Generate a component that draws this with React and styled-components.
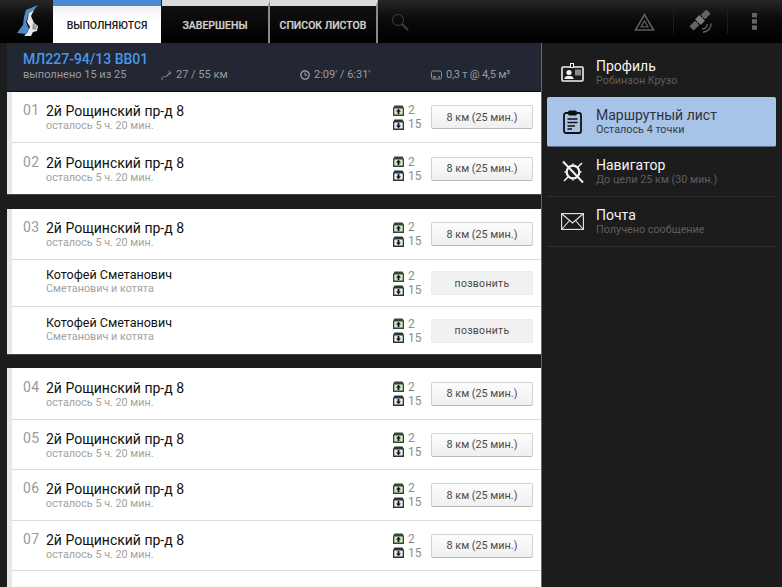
import React from 'react';
import styled, { createGlobalStyle } from 'styled-components';

const Global = createGlobalStyle`
  html, body { margin: 0; padding: 0; background: #1c1c1c; }
  body { font-family: Roboto, "Liberation Sans", sans-serif; }
  #root { width: 782px; height: 587px; overflow: hidden; }
  * { box-sizing: border-box; }
`;

const Screen = styled.div`width: 782px; height: 587px; display: flex; flex-direction: column; overflow: hidden; background: #1c1c1c;`;
const TopBar = styled.header`height: 43px; flex: none; display: flex; align-items: stretch; background: linear-gradient(#262626, #0a0a0a 45%, #000);`;
const Logo = styled.div`width: 53px; flex: none; display: flex; align-items: center; justify-content: center; padding: 0 0 1px 2px;`;
const Tab = styled.div`
  width: ${p => p.$w}px; flex: none; display: flex; align-items: center; justify-content: center;
  border-top: 6px solid ${p => (p.$active ? '#4a8ad4' : '#dcdcdc')};
  background: ${p => (p.$active ? 'linear-gradient(#eeeeee, #ffffff 35%)' : 'linear-gradient(#111, #000)')};
  border-right: ${p => (p.$active ? 'none' : '2px solid #8a8a8a')};
  color: ${p => (p.$active ? '#1a1a1a' : '#cfcfcf')};
  font-size: 10.5px; font-weight: 500; padding-top: 1px; margin-right: ${p => p.$mr || 0}px;
  text-shadow: ${p => (p.$active ? 'none' : '0 0 1px #777')};
`;
const SearchSlot = styled.div`width: 36px; margin-left: 13px; display: flex; align-items: center;`;
const TopActions = styled.div`margin-left: auto; display: flex; align-items: center; padding-right: 25px;`;
const ActionSlot = styled.div`width: ${p => p.$w}px; height: 24px; display: flex; align-items: center; justify-content: ${p => p.$j || 'center'}; border-right: ${p => (p.$line ? '1px solid #1d1d1d' : 'none')};`;

const Main = styled.div`flex: 1; display: flex; min-height: 0;`;
const LeftCol = styled.main`width: 542px; flex: none; padding-left: 7px; border-right: 1px solid #666; display: flex; flex-direction: column; overflow: hidden;`;
const RouteHead = styled.div`height: 49px; flex: none; background: #222733; border-bottom: 1px solid #0c0c0c; padding: 9px 0 0 16px; color: #a9a9a9;`;
const RouteId = styled.div`color: #4a96ec; font-size: 14px; font-weight: 500; line-height: 15px;`;
const StatRow = styled.div`display: flex; font-size: 11px; line-height: 14px; margin-top: 1px; color: #9b9b9b;`;
const Stat = styled.div`display: flex; align-items: center; gap: 4px; width: ${p => p.$w}px; flex: none; letter-spacing: ${p => p.$tight ? '-0.25px' : '0'};`;

const Card = styled.section`
  background: #fff; flex: none; margin-bottom: ${p => p.$mb || 0}px;
  border-left: 5px solid #e7e7e7; box-shadow: 0 1px 0 #444;
`;
const Row = styled.div`
  height: ${p => p.$h}px; display: flex; align-items: center; padding: 0 8px 0 11px;
  border-bottom: ${p => (p.$last ? 'none' : '1px solid #dcdcdc')};
`;
const Num = styled.div`width: 23px; flex: none; color: #9a9a9a; font-size: 14px; letter-spacing: 0.3px; margin-top: -14px;`;
const Info = styled.div`flex: 1; min-width: 0; margin-left: ${p => (p.$contact ? 23 : 0)}px; margin-top: ${p => (p.$contact ? -4 : 2)}px;`;
const Title = styled.div`color: #111; font-size: ${p => (p.$small ? 12.5 : 14)}px; line-height: 15px;`;
const Sub = styled.div`color: #a2a2a2; font-size: 10.8px; line-height: 13px;`;
const Counts = styled.div`width: 38px; flex: none; display: flex; flex-direction: column;`;
const Count = styled.div`display: flex; align-items: center; gap: 4px; color: #8c8c8c; font-size: 12px; height: 14px;`;
const RowButton = styled.div`
  width: 102px; height: 24px; flex: none; display: flex; align-items: center; justify-content: center;
  border-radius: 2px; font-size: ${p => (p.$flat ? 10.5 : 10.8)}px; color: #4a4a4a;
  letter-spacing: ${p => (p.$flat ? 0.3 : 0)}px;
  background: ${p => (p.$flat ? '#f1f1f1' : 'linear-gradient(#fdfdfd, #efefef)')};
  border: 1px solid ${p => (p.$flat ? '#ececec' : '#d2d2d2')};
  border-bottom-color: ${p => (p.$flat ? '#ececec' : '#b8b8b8')};
`;

const Side = styled.aside`flex: 1; padding: 2px 6px 0 5px;`;
const SideItem = styled.div`
  height: ${p => p.$h}px; display: flex; align-items: center; padding: ${p => p.$pt || 0}px 0 0 14px; gap: 12px;
  background: ${p => (p.$active ? '#a8c3e8' : 'transparent')};
  border-radius: ${p => (p.$active ? '2px' : 0)};
  border-bottom: 1px solid ${p => (p.$active ? '#5c6f8a' : p.$line ? '#2c2c2c' : 'transparent')};
`;
const SideIcon = styled.div`width: 23px; flex: none; display: flex; justify-content: center; color: ${p => (p.$active ? '#111' : '#f0f0f0')};`;
const SideTitle = styled.div`font-size: 14px; line-height: 16px; color: ${p => (p.$active ? '#2b3440' : '#f4f4f4')};`;
const SideSub = styled.div`font-size: 10.8px; line-height: 13px; color: ${p => (p.$active ? '#2f3b4b' : '#5e5e5e')};`;

const Penguin = () => (
  <svg width="22" height="32" viewBox="0 0 22 32">
    <path d="M21 0 L9 5 L7 12 L6 20 L0 28 L9 29 L12 24 L9 17 L12 8 L17 5 Z" fill="#4d8bd0" />
    <path d="M12 8 L17 5 L14 11 L17 18 L21 21 L20 26 L16 27 L14 31 L7 31 L10 28 L13 22 L10 17 Z" fill="#e8e8e8" />
    <path d="M16 18 L20 21 L19 25 L15 24 Z" fill="#9a9a9a" />
  </svg>
);
const Search = () => (
  <svg width="18" height="18" viewBox="0 0 18 18" fill="none" stroke="#3a3a3a">
    <circle cx="7" cy="7" r="5.5" strokeWidth="1.2" />
    <path d="M11 11 L17 17" strokeWidth="2.4" />
  </svg>
);
const Hazard = () => (
  <svg width="21" height="18" viewBox="0 0 21 18" fill="none" stroke="#5c5c5c" strokeWidth="1.7">
    <path d="M10.5 1.6 L19.6 17 H1.4 Z" />
    <path d="M10.5 8 L14 13.8 H7 Z" strokeWidth="1.3" />
  </svg>
);
const Satellite = () => (
  <svg width="24" height="23" viewBox="0 0 24 23">
    <g transform="rotate(-45 11 10)" fill="#636363">
      <rect x="-1" y="7" width="8" height="6" />
      <rect x="15" y="7" width="8" height="6" />
      <rect x="8" y="6" width="6" height="8" fill="#7a7a7a" />
      <rect x="7" y="9.3" width="1" height="1.4" />
      <rect x="14" y="9.3" width="1" height="1.4" />
    </g>
    <path d="M13 19 C16 19 18 17 18.4 14 M14 22.3 C19 22 22 18 22 13.5" fill="none" stroke="#636363" strokeWidth="1.4" />
  </svg>
);
const Dots = () => (
  <svg width="5" height="17" viewBox="0 0 5 17" fill="#646464">
    <rect width="5" height="4.4" /><rect y="6.2" width="5" height="4.4" /><rect y="12.4" width="5" height="4.4" />
  </svg>
);
const Route = () => (
  <svg width="11" height="11" viewBox="0 0 11 11" fill="none" stroke="#8b8b8b" strokeWidth="1">
    <path d="M1 10 C0.5 6.5 3 6.5 5 6.5 C7.5 6.5 6 3 9 3 M7.5 1 L10 3 L7.5 5" />
  </svg>
);
const Clock = () => (
  <svg width="10" height="10" viewBox="0 0 10 10" fill="none" stroke="#a5a5a5" strokeWidth="1.2">
    <circle cx="5" cy="5" r="4.2" /><path d="M5 2.4 V5.2 H7.3" strokeWidth="1" />
  </svg>
);
const Cargo = () => (
  <svg width="11" height="10" viewBox="0 0 11 10" fill="none" stroke="#8f8f8f">
    <rect x="0.5" y="1" width="10" height="8" rx="1.5" />
    <path d="M2 7 H5 M7 7 H9" strokeWidth="1.4" />
  </svg>
);
const BoxIcon = ({ up }) => (
  <svg width="11" height="11" viewBox="0 0 11 11">
    <path d="M1.5 0.5 H9.5 L11 3 V11 H0 V3 Z" fill={up ? '#33463a' : '#2e3338'} />
    <rect x="1.3" y="3.5" width="8.4" height="6" fill={up ? '#d7e8c8' : '#e9eef2'} />
    {up ? <path d="M5.5 3.8 L8 6.6 H6.4 V9 H4.6 V6.6 H3 Z" fill="#111" /> : <path d="M5.5 9.2 L8 6.4 H6.4 V4 H4.6 V6.4 H3 Z" fill="#111" />}
  </svg>
);
const BadgeIcon = () => (
  <svg width="23" height="19" viewBox="0 0 23 19" fill="none">
    <rect x="1" y="4" width="21" height="14" rx="1" stroke="#f0f0f0" strokeWidth="1.6" />
    <rect x="9.5" y="0.5" width="3" height="4" fill="#1c1c1c" stroke="#f0f0f0" />
    <circle cx="8" cy="9.5" r="2.6" fill="#f0f0f0" />
    <path d="M3.5 16 C3.5 13 6 13 8 13 C10 13 12.5 13 12.5 16 Z" fill="#f0f0f0" />
    <rect x="14" y="6.5" width="6" height="6" fill="#8a8a8a" />
  </svg>
);
const ClipIcon = () => (
  <svg width="19" height="24" viewBox="0 0 19 24" fill="none" stroke="#111">
    <rect x="1" y="3" width="17" height="20" rx="2" strokeWidth="1.8" />
    <rect x="5.5" y="1" width="8" height="4" rx="1" fill="#111" strokeWidth="1" />
    <path d="M4.5 9 H14.5 M4.5 12.5 H14.5 M4.5 16 H12 M4.5 19 H9" strokeWidth="1.4" />
  </svg>
);
const NavIcon = () => (
  <svg width="22" height="24" viewBox="0 0 22 24" fill="none" stroke="#f0f0f0">
    <circle cx="11" cy="12" r="6.3" strokeWidth="2.2" />
    <path d="M1 1.5 L21 22.5" strokeWidth="2" />
    <path d="M15.5 7.5 L20 3 M6.5 16.5 L2 21 M11 3.5 V5.5 M11 18.5 V20.5 M2.5 12 H4.5 M17.5 12 H19.5" strokeWidth="1.5" />
  </svg>
);
const MailIcon = () => (
  <svg width="23" height="17" viewBox="0 0 23 17" fill="none" stroke="#e8e8e8" strokeWidth="1.1">
    <rect x="0.6" y="0.6" width="21.8" height="15.8" />
    <path d="M1 1 L11.5 10 L22 1 M1 16 L8.5 7.5 M22 16 L14.5 7.5" />
  </svg>
);

const Stop = ({ n, h, last }) => (
  <Row $h={h} $last={last}>
    <Num>{n}</Num>
    <Info>
      <Title>2й Рощинский пр-д 8</Title>
      <Sub>осталось 5 ч. 20 мин.</Sub>
    </Info>
    <Counts>
      <Count><BoxIcon up />2</Count>
      <Count><BoxIcon />15</Count>
    </Counts>
    <RowButton>8 км (25 мин.)</RowButton>
  </Row>
);
const Contact = ({ h, last }) => (
  <Row $h={h} $last={last}>
    <Info $contact>
      <Title $small>Котофей Сметанович</Title>
      <Sub>Сметанович и котята</Sub>
    </Info>
    <Counts>
      <Count><BoxIcon up />2</Count>
      <Count><BoxIcon />15</Count>
    </Counts>
    <RowButton $flat>позвонить</RowButton>
  </Row>
);

const menu = [
  { icon: <BadgeIcon />, title: 'Профиль', sub: 'Робинзон Крузо', h: 52, pt: 4 },
  { icon: <ClipIcon />, title: 'Маршрутный лист', sub: 'Осталось 4 точки', h: 50, active: true },
  { icon: <NavIcon />, title: 'Навигатор', sub: 'До цели 25 км (30 мин.)', h: 50, line: true },
  { icon: <MailIcon />, title: 'Почта', sub: 'Получено сообщение', h: 50, line: true },
];

export default function App() {
  return (
    <Screen>
      <Global />
      <TopBar>
        <Logo><Penguin /></Logo>
        <Tab $active $w={108} $mr={1}>ВЫПОЛНЯЮТСЯ</Tab>
        <Tab $w={108}>ЗАВЕРШЕНЫ</Tab>
        <Tab $w={108}>СПИСОК ЛИСТОВ</Tab>
        <SearchSlot><Search /></SearchSlot>
        <TopActions>
          <ActionSlot $w={58} $line><Hazard /></ActionSlot>
          <ActionSlot $w={54} $line><Satellite /></ActionSlot>
          <ActionSlot $w={29} $j="flex-end"><Dots /></ActionSlot>
        </TopActions>
      </TopBar>
      <Main>
        <LeftCol>
          <RouteHead>
            <RouteId>МЛ227-94/13 ВВ01</RouteId>
            <StatRow>
              <Stat $w={138}>выполнено 15 из 25</Stat>
              <Stat $w={139}><Route />27 / 55 км</Stat>
              <Stat $w={131}><Clock />2:09' / 6:31'</Stat>
              <Stat $w={100} $tight><Cargo />0,3 т @ 4,5 м³</Stat>
            </StatRow>
          </RouteHead>
          <Card $mb={15}>
            <Stop n="01" h={51} />
            <Stop n="02" h={51} last />
          </Card>
          <Card $mb={14}>
            <Stop n="03" h={51} />
            <Contact h={47} />
            <Contact h={47} last />
          </Card>
          <Card>
            <Stop n="04" h={52} />
            <Stop n="05" h={50} />
            <Stop n="06" h={51} />
            <Stop n="07" h={50} />
            <Row $h={40} $last />
          </Card>
        </LeftCol>
        <Side>
          {menu.map(m => (
            <SideItem key={m.title} $h={m.h} $pt={m.pt} $active={m.active} $line={m.line}>
              <SideIcon $active={m.active}>{m.icon}</SideIcon>
              <div>
                <SideTitle $active={m.active}>{m.title}</SideTitle>
                <SideSub $active={m.active}>{m.sub}</SideSub>
              </div>
            </SideItem>
          ))}
        </Side>
      </Main>
    </Screen>
  );
}
